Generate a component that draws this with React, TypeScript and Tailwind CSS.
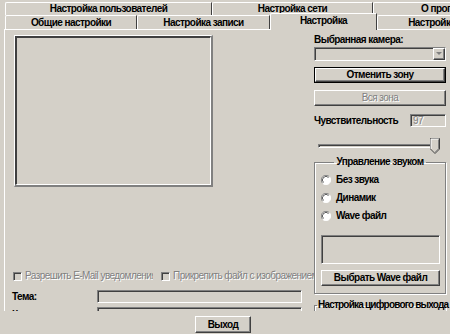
import React from 'react';

const raised =
  'border border-t-white border-l-white border-r-[#404040] border-b-[#404040] shadow-[inset_-1px_-1px_0_#808080]';
const sunken =
  'border border-t-[#808080] border-l-[#808080] border-r-white border-b-white shadow-[inset_1px_1px_0_#404040]';
const disabledText = 'font-normal text-[#808080] [text-shadow:1px_1px_0_#fff]';

function Tab({ label, width, last }: { label: string; width: string; last?: boolean }) {
  return (
    <div
      className={`${width} h-full shrink-0 flex items-center justify-center whitespace-nowrap overflow-hidden border-t border-l border-t-white border-l-white rounded-tl-[2px] ${
        last ? '' : 'border-r border-r-[#404040]'
      }`}
    >
      {label}
    </div>
  );
}

function Radio({ label }: { label: string }) {
  return (
    <div className="flex h-[18px] items-center pl-[6px]">
      <svg width="10" height="10" viewBox="0 0 12 12" className="shrink-0">
        <circle cx="6" cy="6" r="5.5" fill="#ffffff" />
        <path d="M10 2 A5.6 5.6 0 0 0 2 10" stroke="#808080" strokeWidth="1.2" fill="none" />
        <path d="M9 3 A4.2 4.2 0 0 0 3 9" stroke="#404040" strokeWidth="1" fill="none" />
        <path d="M2 10 A5.6 5.6 0 0 0 10 2" stroke="#ffffff" strokeWidth="1.2" fill="none" />
      </svg>
      <span className="ml-[5px]">{label}</span>
    </div>
  );
}

function Checkbox({ label, width }: { label: string; width: string }) {
  return (
    <div className="flex items-center">
      <div className={`w-[9px] h-[9px] shrink-0 bg-[#d4d0c8] ${sunken}`} />
      <span className={`ml-[3px] ${width} overflow-hidden whitespace-nowrap ${disabledText}`}>{label}</span>
    </div>
  );
}

export default function App() {
  return (
    <div className="w-[450px] h-[334px] overflow-hidden bg-[#d4d0c8] text-black text-[10px] font-bold leading-[12px] tracking-[-0.55px] font-['Liberation_Sans',sans-serif]">
      {/* tabs */}
      <div className="pt-[2px] pl-[5px]">
        <div className="flex h-[13px]">
          <Tab label="Настройка пользователей" width="w-[207px]" />
          <Tab label="Настройка сети" width="w-[161px]" />
          <Tab label="О программе" width="w-[154px]" last />
        </div>
        <div className="flex h-[14px]">
          <Tab label="Общие настройки" width="w-[132px]" />
          <Tab label="Настройка записи" width="w-[133px]" />
          <div className="relative z-10 -mt-[2px] h-[17px] w-[107px] shrink-0 flex items-center justify-center bg-[#d4d0c8] border-t border-l border-r border-t-white border-l-white border-r-[#404040] rounded-tl-[2px] pb-[2px]">
            Настройка
          </div>
          <Tab label="Настройка тревоги" width="w-[146px]" last />
        </div>
      </div>

      {/* page */}
      <div className="ml-[4px] h-[282px] border-t border-l border-white overflow-hidden flex items-start">
        {/* left column */}
        <div className="w-[309px] shrink-0 flex flex-col *:shrink-0">
          <div className="ml-[9px] mt-[5px] w-[199px] h-[152px] border-t border-l border-r-2 border-b-2 border-t-white border-l-white border-r-[#808080] border-b-[#808080]">
            <div className="w-full h-full border-t-2 border-l-2 border-r border-b border-t-[#404040] border-l-[#404040] border-r-white border-b-white" />
          </div>

          <div className="mt-[83px] flex h-[12px] items-center pl-[8px] gap-[8px]">
            <Checkbox label="Разрешить E-Mail уведомления" width="w-[128px]" />
            <Checkbox label="Прикрепить файл с изображением" width="w-[141px]" />
          </div>

          <div className="mt-[8px] flex h-[13px] items-center">
            <span className="w-[92px] pl-[7px]">Тема:</span>
            <div className={`w-[205px] h-[13px] ${sunken}`} />
          </div>
          <div className="mt-[4px] flex h-[13px] items-start">
            <span className="w-[92px] pl-[7px] pt-[2px]">Кому:</span>
            <div className={`w-[205px] h-[13px] ${sunken}`} />
          </div>
        </div>

        {/* right column */}
        <div className="w-[132px] shrink-0 flex flex-col *:shrink-0">
          <div className="mt-[4px] h-[12px]">Выбранная камера:</div>
          <div className={`mt-[1px] h-[14px] flex justify-end ${sunken}`}>
            <div className={`w-[12px] h-full flex items-center justify-center ${raised}`}>
              <svg width="6" height="4" viewBox="0 0 6 4">
                <path d="M0 0 H6 L3 3 Z" fill="#808080" />
              </svg>
            </div>
          </div>
          <div className="mt-[6px] h-[16px] border border-black">
            <div className={`h-full flex items-center justify-center ${raised}`}>Отменить зону</div>
          </div>
          <div className={`mt-[7px] h-[16px] flex items-center justify-center ${raised} ${disabledText}`}>
            Вся зона
          </div>
          <div className="mt-[8px] h-[13px] flex items-center">
            <span>Чувствительность</span>
            <div className={`ml-auto w-[36px] h-[13px] pl-[2px] flex items-center ${sunken} ${disabledText}`}>
              97
            </div>
          </div>
          <div className="relative mt-[9px] h-[20px] pl-[4px] pr-[6px] flex items-center">
            <div className="w-full h-[4px] border-t border-l border-t-[#808080] border-l-[#808080] border-b border-r border-b-white border-r-white shadow-[inset_1px_1px_0_#404040]" />
            <svg width="10" height="16" viewBox="0 0 10 16" className="absolute right-[6px] top-[2px]">
              <path d="M0.5 0.5 H9.5 V11 L5 15.5 L0.5 11 Z" fill="#d4d0c8" stroke="#404040" />
              <path d="M1 11 V1 H9" stroke="#ffffff" fill="none" />
              <path d="M8.5 1.5 V10.8 L5 14.3" stroke="#808080" fill="none" />
            </svg>
          </div>

          <fieldset className="h-[138px] w-[132px] min-w-0 border border-[#808080] shadow-[inset_1px_1px_0_#fff,1px_1px_0_#fff]">
            <legend className="mx-auto px-[2px] h-[12px]">Управление звуком</legend>
            <div className="pt-[3px]">
              <Radio label="Без звука" />
              <Radio label="Динамик" />
              <Radio label="Wave файл" />
            </div>
            <div className={`ml-[6px] mt-[10px] w-[119px] h-[29px] ${sunken}`} />
            <div className={`ml-[6px] mt-[6px] w-[119px] h-[16px] flex items-center justify-center ${raised}`}>
              Выбрать Wave файл
            </div>
          </fieldset>

          <fieldset className="mt-[5px] h-[40px] w-[132px] min-w-0 border border-[#808080] shadow-[inset_1px_1px_0_#fff,1px_1px_0_#fff]">
            <legend className="ml-[2px] px-[1px] h-[12px] whitespace-nowrap tracking-[-0.8px]">
              Настройка цифрового выхода
            </legend>
          </fieldset>
        </div>
      </div>

      {/* bottom */}
      <div className={`ml-[195px] mt-[5px] w-[56px] h-[17px] flex items-center justify-center ${raised}`}>
        Выход
      </div>
    </div>
  );
}
